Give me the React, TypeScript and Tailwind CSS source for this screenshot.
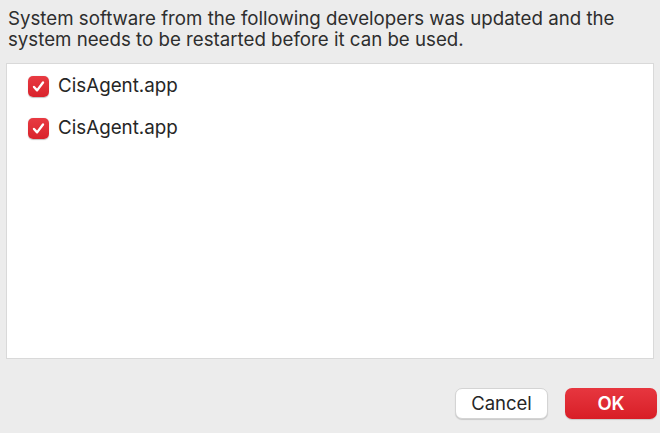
import { useState } from "react";

const font = { fontFamily: "Inter, 'Liberation Sans', sans-serif" };

function CheckRow({ label }: { label: string }) {
  const [checked, setChecked] = useState(true);
  return (
    <label className="flex h-[42px] cursor-default items-center gap-[9px] pl-[21px]">
      <button
        type="button"
        onClick={() => setChecked(!checked)}
        className={
          checked
            ? "flex h-[21px] w-[21px] items-center justify-center rounded-[5px] bg-gradient-to-b from-[#e83a42] to-[#d9222b] shadow-[0_0.5px_1px_rgba(0,0,0,0.25)]"
            : "flex h-[21px] w-[21px] items-center justify-center rounded-[5px] border border-[#c8c8c8] bg-white"
        }
      >
        {checked && (
          <svg width="15" height="15" viewBox="0 0 14 14" fill="none">
            <path
              d="M2.8 7.4 L5.7 10.6 L11.2 3.2"
              stroke="white"
              strokeWidth="2.2"
              strokeLinecap="round"
              strokeLinejoin="round"
            />
          </svg>
        )}
      </button>
      <span className="text-[18.8px] text-[#262626]">{label}</span>
    </label>
  );
}

export default function App() {
  return (
    <div
      className="flex h-[433px] w-[660px] flex-col bg-[#ececec] text-[#262626]"
      style={font}
    >
      <p className="px-[8px] pt-[8px] text-[18.7px] leading-[21px] text-[#2e2e2e]">
        System software from the following developers was updated and the
        <br />
        system needs to be restarted before it can be used.
      </p>
      <div className="mx-[6px] mt-[13px] h-[296px] border border-[#d9d9d9] bg-white pt-[1px]">
        <CheckRow label="CisAgent.app" />
        <CheckRow label="CisAgent.app" />
      </div>
      <div className="flex justify-end gap-[17px] pr-[3px] pt-[29px]">
        <button
          type="button"
          className="h-[31px] w-[93px] rounded-[7px] border border-[#d4d4d4] bg-white text-[18.5px] text-[#262626] shadow-[0_1px_1px_rgba(0,0,0,0.15)]"
        >
          Cancel
        </button>
        <button
          type="button"
          className="h-[31px] w-[92px] rounded-[7px] bg-gradient-to-b from-[#e7363f] to-[#d81d26] text-[18.5px] font-semibold text-white shadow-[0_1px_1px_rgba(0,0,0,0.15)]"
        >
          OK
        </button>
      </div>
    </div>
  );
}
